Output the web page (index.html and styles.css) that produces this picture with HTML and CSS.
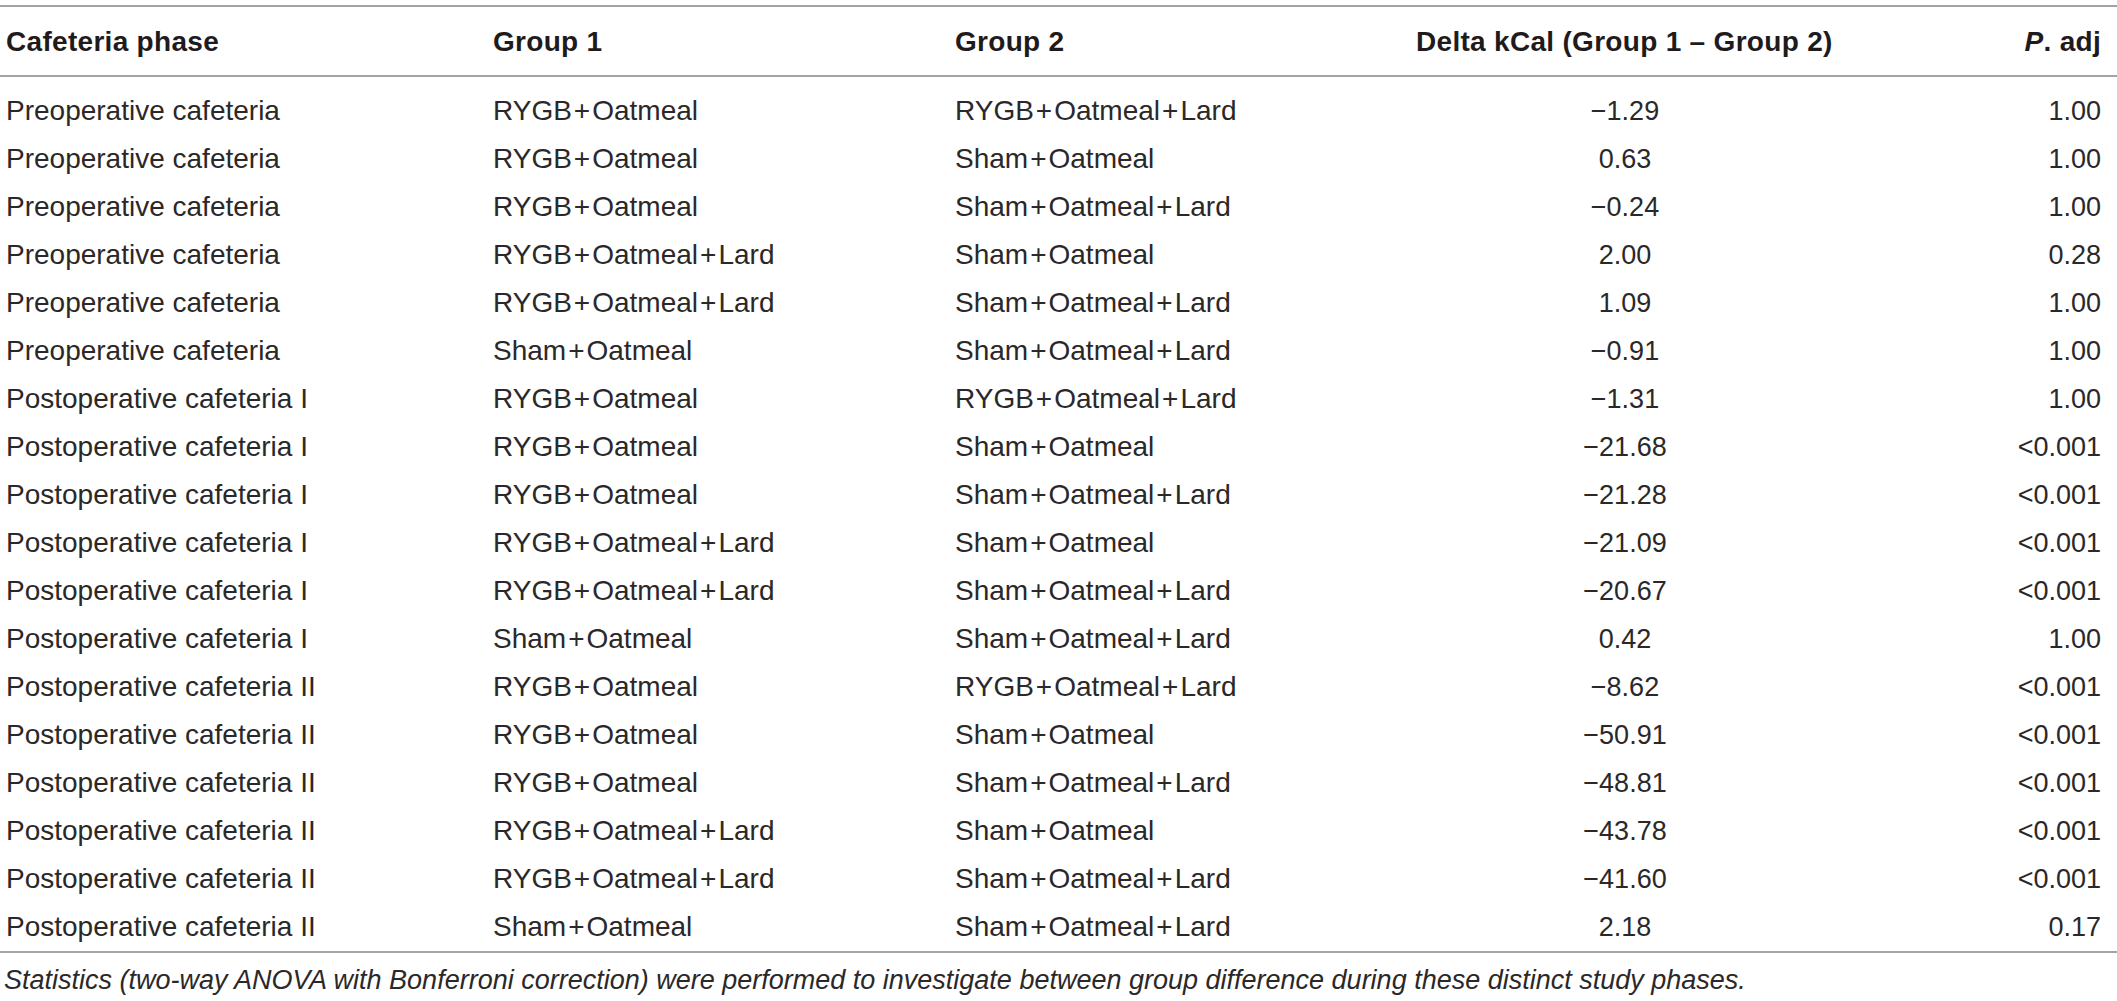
FILE: index.html
```html
<!DOCTYPE html>
<html lang="en">
<head>
<meta charset="utf-8">
<title>Table</title>
<link rel="stylesheet" href="styles.css">
</head>
<body>
<div class="wrap">
<table class="data">
<colgroup>
<col class="c1"><col class="c2"><col class="c3"><col class="c4"><col class="c5">
</colgroup>
<thead>
<tr><th>Cafeteria phase</th><th>Group 1</th><th>Group 2</th><th class="num">Delta kCal (Group 1 – Group 2)</th><th class="p"><i>P</i>. adj</th></tr>
</thead>
<tbody>
<tr class="first"><td>Preoperative cafeteria</td><td>RYGB<span class="pl">+</span>Oatmeal</td><td>RYGB<span class="pl">+</span>Oatmeal<span class="pl">+</span>Lard</td><td class="num">−1.29</td><td class="p">1.00</td></tr>
<tr><td>Preoperative cafeteria</td><td>RYGB<span class="pl">+</span>Oatmeal</td><td>Sham<span class="pl">+</span>Oatmeal</td><td class="num">0.63</td><td class="p">1.00</td></tr>
<tr><td>Preoperative cafeteria</td><td>RYGB<span class="pl">+</span>Oatmeal</td><td>Sham<span class="pl">+</span>Oatmeal<span class="pl">+</span>Lard</td><td class="num">−0.24</td><td class="p">1.00</td></tr>
<tr><td>Preoperative cafeteria</td><td>RYGB<span class="pl">+</span>Oatmeal<span class="pl">+</span>Lard</td><td>Sham<span class="pl">+</span>Oatmeal</td><td class="num">2.00</td><td class="p">0.28</td></tr>
<tr><td>Preoperative cafeteria</td><td>RYGB<span class="pl">+</span>Oatmeal<span class="pl">+</span>Lard</td><td>Sham<span class="pl">+</span>Oatmeal<span class="pl">+</span>Lard</td><td class="num">1.09</td><td class="p">1.00</td></tr>
<tr><td>Preoperative cafeteria</td><td>Sham<span class="pl">+</span>Oatmeal</td><td>Sham<span class="pl">+</span>Oatmeal<span class="pl">+</span>Lard</td><td class="num">−0.91</td><td class="p">1.00</td></tr>
<tr><td>Postoperative cafeteria I</td><td>RYGB<span class="pl">+</span>Oatmeal</td><td>RYGB<span class="pl">+</span>Oatmeal<span class="pl">+</span>Lard</td><td class="num">−1.31</td><td class="p">1.00</td></tr>
<tr><td>Postoperative cafeteria I</td><td>RYGB<span class="pl">+</span>Oatmeal</td><td>Sham<span class="pl">+</span>Oatmeal</td><td class="num">−21.68</td><td class="p">&lt;0.001</td></tr>
<tr><td>Postoperative cafeteria I</td><td>RYGB<span class="pl">+</span>Oatmeal</td><td>Sham<span class="pl">+</span>Oatmeal<span class="pl">+</span>Lard</td><td class="num">−21.28</td><td class="p">&lt;0.001</td></tr>
<tr><td>Postoperative cafeteria I</td><td>RYGB<span class="pl">+</span>Oatmeal<span class="pl">+</span>Lard</td><td>Sham<span class="pl">+</span>Oatmeal</td><td class="num">−21.09</td><td class="p">&lt;0.001</td></tr>
<tr><td>Postoperative cafeteria I</td><td>RYGB<span class="pl">+</span>Oatmeal<span class="pl">+</span>Lard</td><td>Sham<span class="pl">+</span>Oatmeal<span class="pl">+</span>Lard</td><td class="num">−20.67</td><td class="p">&lt;0.001</td></tr>
<tr><td>Postoperative cafeteria I</td><td>Sham<span class="pl">+</span>Oatmeal</td><td>Sham<span class="pl">+</span>Oatmeal<span class="pl">+</span>Lard</td><td class="num">0.42</td><td class="p">1.00</td></tr>
<tr><td>Postoperative cafeteria II</td><td>RYGB<span class="pl">+</span>Oatmeal</td><td>RYGB<span class="pl">+</span>Oatmeal<span class="pl">+</span>Lard</td><td class="num">−8.62</td><td class="p">&lt;0.001</td></tr>
<tr><td>Postoperative cafeteria II</td><td>RYGB<span class="pl">+</span>Oatmeal</td><td>Sham<span class="pl">+</span>Oatmeal</td><td class="num">−50.91</td><td class="p">&lt;0.001</td></tr>
<tr><td>Postoperative cafeteria II</td><td>RYGB<span class="pl">+</span>Oatmeal</td><td>Sham<span class="pl">+</span>Oatmeal<span class="pl">+</span>Lard</td><td class="num">−48.81</td><td class="p">&lt;0.001</td></tr>
<tr><td>Postoperative cafeteria II</td><td>RYGB<span class="pl">+</span>Oatmeal<span class="pl">+</span>Lard</td><td>Sham<span class="pl">+</span>Oatmeal</td><td class="num">−43.78</td><td class="p">&lt;0.001</td></tr>
<tr><td>Postoperative cafeteria II</td><td>RYGB<span class="pl">+</span>Oatmeal<span class="pl">+</span>Lard</td><td>Sham<span class="pl">+</span>Oatmeal<span class="pl">+</span>Lard</td><td class="num">−41.60</td><td class="p">&lt;0.001</td></tr>
<tr><td>Postoperative cafeteria II</td><td>Sham<span class="pl">+</span>Oatmeal</td><td>Sham<span class="pl">+</span>Oatmeal<span class="pl">+</span>Lard</td><td class="num">2.18</td><td class="p">0.17</td></tr>
</tbody>
</table>
<p class="note">Statistics (two-way ANOVA with Bonferroni correction) were performed to investigate between group difference during these distinct study phases.</p>
</div>
</body>
</html>
```
FILE: styles.css
```css
html, body {
  margin: 0;
  padding: 0;
  background: #ffffff;
}
body {
  font-family: "Liberation Sans", Arial, Helvetica, sans-serif;
  color: #231f20;
}
.wrap {
  padding-top: 5px;
  width: 2117px;
}
.data {
  width: 2117px;
  border-collapse: collapse;
  table-layout: fixed;
  font-size: 28px;
  line-height: 48px;
}
.c1 { width: 487px; }
.c2 { width: 462px; }
.c3 { width: 461px; }
.c4 { width: 430px; }
.c5 { width: 277px; }
.data thead tr {
  border-top: 2px solid #a3a3a3;
  border-bottom: 2px solid #a3a3a3;
}
.data th {
  font-weight: bold;
  font-size: 28px;
  letter-spacing: 0.3px;
  text-align: left;
  padding: 11px 0 9px 6px;
  white-space: nowrap;
  color: #1f1b1c;
}
.data td {
  padding: 0 0 0 6px;
  white-space: nowrap;
  font-weight: normal;
  color: #2b2829;
}
.pl {
  margin: 0 2px;
}
.data tbody tr.first td {
  padding-top: 10px;
}
.data tbody tr:last-child {
  border-bottom: 2px solid #a3a3a3;
}
.data td.num {
  text-align: center;
  padding-left: 0;
  font-size: 27px;
}
.data td.p {
  font-size: 27px;
}
.data .p {
  text-align: right;
  padding-right: 16px;
  padding-left: 0;
}
.data th i {
  font-style: italic;
}
.note {
  margin: 12px 0 0 4px;
  font-size: 27px;
  line-height: 30px;
  font-style: italic;
  color: #2b2829;
}
```
